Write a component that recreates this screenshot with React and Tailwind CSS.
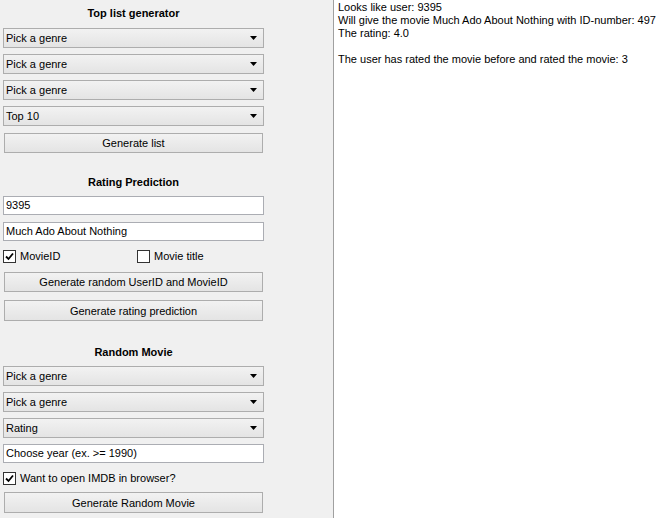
import React from 'react';

const font = { fontFamily: '"Liberation Sans", Arial, sans-serif' };

const Combo = ({ label, className = '' }) => (
    <div className={`flex h-[20px] w-[261px] items-center justify-between border border-[#adadad] bg-gradient-to-b from-[#f2f2f2] to-[#e4e4e4] pl-[2px] pr-[6px] ${className}`}>
        <span className="leading-none text-black">{label}</span>
        <svg width="7" height="4" viewBox="0 0 7 4">
            <polygon points="0,0 7,0 3.5,4" fill="#000" />
        </svg>
    </div>
);

const Button = ({ label, className = '', h = 'h-[20px]' }) => (
    <div className={`ml-[1px] flex ${h} w-[259px] items-center justify-center border border-[#adadad] bg-gradient-to-b from-[#f2f2f2] to-[#e4e4e4] pt-[1px] ${className}`}>
        <span className="leading-none text-black">{label}</span>
    </div>
);

const Input = ({ value, className = '' }) => (
    <div className={`flex h-[19px] w-[261px] items-center border border-[#abadb3] bg-white pl-[2px] ${className}`}>
        <span className="leading-none text-black">{value}</span>
    </div>
);

const Check = ({ checked, label, className = '' }) => (
    <div className={`flex h-[16px] items-center ${className}`}>
        <div className="flex h-[13px] w-[13px] items-center justify-center border border-[#333333] bg-white">
            {checked && (
                <svg width="9" height="9" viewBox="0 0 9 9">
                    <path d="M1 4.5 L3.5 7 L8 1.5" stroke="#000" strokeWidth="1.8" fill="none" />
                </svg>
            )}
        </div>
        <span className="ml-[4px] leading-none text-black">{label}</span>
    </div>
);

const Title = ({ children, className = '' }) => (
    <div className={`flex h-[16px] w-[261px] items-center justify-center font-bold text-black ${className}`}>{children}</div>
);

export default function App() {
    return (
        <div className="flex h-[518px] w-[661px] text-[11px]" style={font}>
            <div className="flex w-[333px] shrink-0 flex-col bg-[#f0f0f0] pl-[3px] pt-[5px]">
                <Title>Top list generator</Title>
                <Combo label="Pick a genre" className="mt-[7px]" />
                <Combo label="Pick a genre" className="mt-[6px]" />
                <Combo label="Pick a genre" className="mt-[6px]" />
                <Combo label="Top 10" className="mt-[6px]" />
                <Button label="Generate list" className="mt-[7px]" />

                <Title className="mt-[21px]">Rating Prediction</Title>
                <Input value="9395" className="mt-[6px]" />
                <Input value="Much Ado About Nothing" className="mt-[7px]" />
                <div className="mt-[7px] flex">
                    <Check checked label="MovieID" className="w-[134px]" />
                    <Check label="Movie title" />
                </div>
                <Button label="Generate random UserID and MovieID" className="mt-[8px]" />
                <Button label="Generate rating prediction" className="mt-[8px]" h="h-[21px]" />

                <Title className="mt-[23px]">Random Movie</Title>
                <Combo label="Pick a genre" className="mt-[6px]" />
                <Combo label="Pick a genre" className="mt-[6px]" />
                <Combo label="Rating" className="mt-[6px]" />
                <Input value="Choose year (ex. >= 1990)" className="mt-[6px]" />
                <Check checked label="Want to open IMDB in browser?" className="mt-[7px]" />
                <Button label="Generate Random Movie" className="mt-[6px]" h="h-[21px]" />
            </div>
            <div className="w-[1px] bg-[#a0a0a0]" />
            <div className="flex-1 whitespace-nowrap bg-white pl-[4px] pt-[1px] leading-[13px] text-black">
                <div>Looks like user: 9395</div>
                <div>Will give the movie Much Ado About Nothing with ID-number: 497</div>
                <div>The rating: 4.0</div>
                <div>&nbsp;</div>
                <div>The user has rated the movie before and rated the movie: 3</div>
            </div>
        </div>
    );
}
